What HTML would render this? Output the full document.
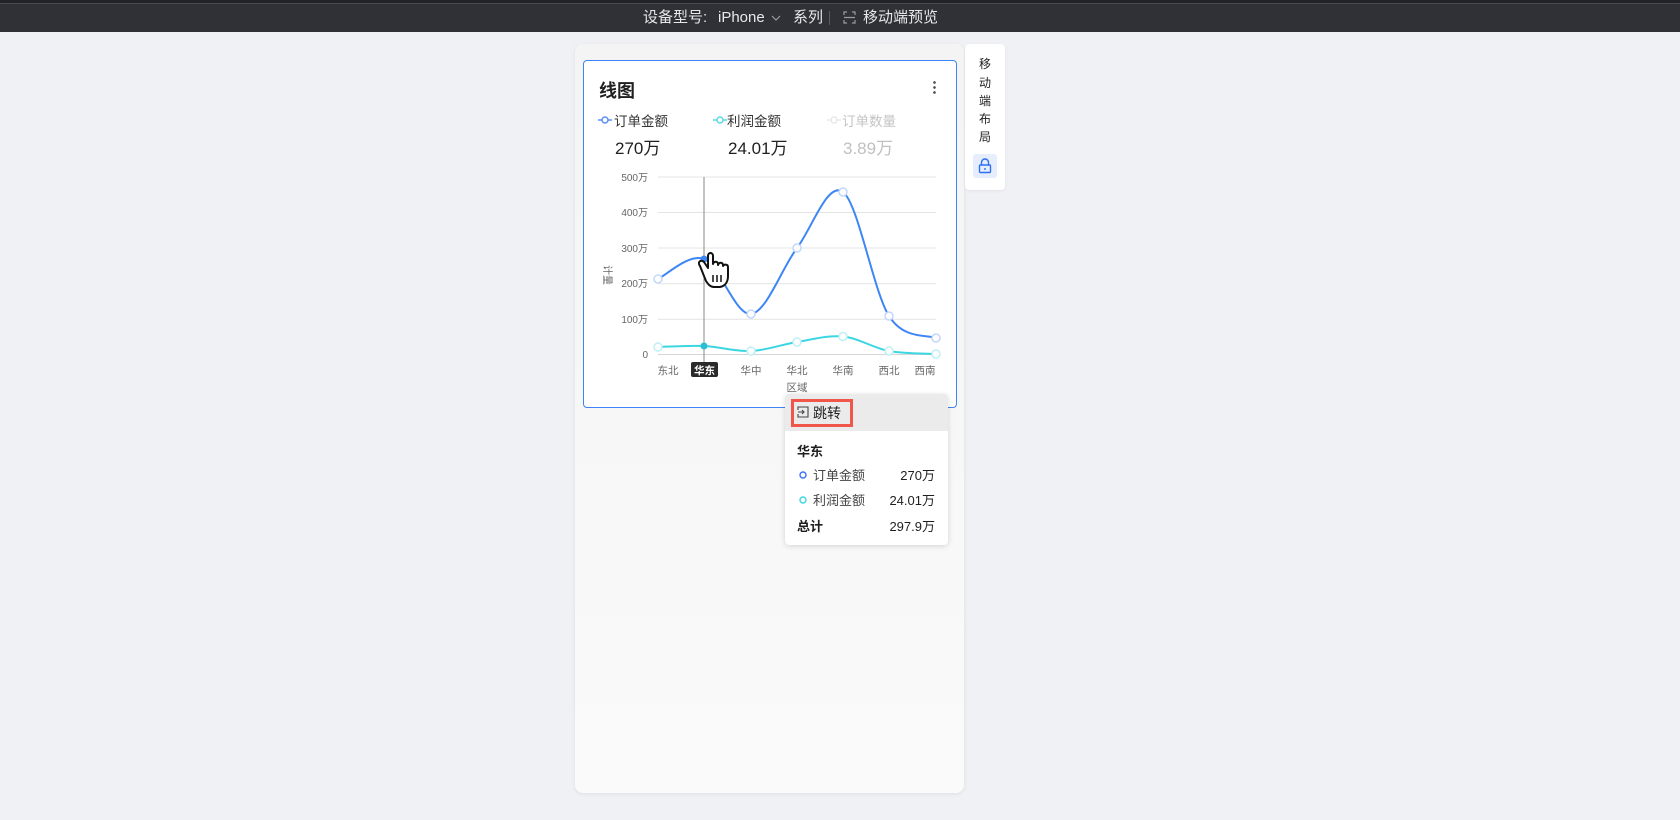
<!DOCTYPE html>
<html><head><meta charset="utf-8"><style>
*{margin:0;padding:0;box-sizing:border-box}
body{width:1680px;height:820px;background:#f0f1f5;font-family:"Liberation Sans","Noto Sans CJK SC",sans-serif;position:relative;overflow:hidden;color:#1f1f1f}
.top{position:absolute;left:0;top:0;width:1680px;height:32px;background:#303137;border-top:3px solid #222328}
.top .line{position:absolute;left:0;top:0;width:100%;height:1px;background:#4a4b52}
.t{position:absolute;top:8px;height:20px;line-height:20px;font-size:15px;color:#e8e8ea;white-space:nowrap}
.phone{position:absolute;left:575px;top:44px;width:389px;height:749px;border-radius:8px;background:linear-gradient(#f4f4f5,#fafafa);box-shadow:0 1px 4px rgba(0,0,0,.08)}
.card{position:absolute;left:583px;top:60px;width:374px;height:348px;background:#fff;border:1px solid #3f84f6;border-radius:4px}
.side{position:absolute;left:965px;top:44px;width:40px;height:146px;background:#fff;border-radius:4px;box-shadow:0 1px 3px rgba(0,0,0,.06)}
.side span{position:absolute;left:0;width:40px;text-align:center;font-size:12px;line-height:16px;color:#222}
.abs{position:absolute;white-space:nowrap}
.tip{position:absolute;left:785px;top:394px;width:163px;height:151px;background:#fff;border-radius:4px;box-shadow:0 1px 6px rgba(0,0,0,.15);overflow:hidden}
</style></head><body>
<div class="top"><div class="line"></div></div>
<div class="t" style="left:643px">设备型号:</div>
<div class="t" style="left:718px">iPhone</div>
<svg class="abs" style="left:771px;top:15px" width="10" height="7"><path d="M1 1l4 4 4-4" fill="none" stroke="#9a9ba0" stroke-width="1.2"/></svg>
<div class="t" style="left:793px">系列</div>
<div class="abs" style="left:829px;top:11px;width:1px;height:14px;background:#5a5b61"></div>
<svg class="abs" style="left:843px;top:11px" width="13" height="13"><path d="M1 4V1h3M9 1h3v3M12 9v3H9M4 12H1V9M1 6.5h11" fill="none" stroke="#9a9ba0" stroke-width="1.2"/></svg>
<div class="t" style="left:863px">移动端预览</div>

<div class="phone"></div>
<div class="card"></div>
<div class="abs" style="left:599px;top:77px;font-size:18px;font-weight:bold;color:#1f1f1f">线图</div>
<div class="abs" style="left:933px;top:80px;width:3px;height:14px;background:radial-gradient(circle,#555 1.2px,transparent 1.5px) 0 0/3px 5px"></div>

<svg class="abs" style="left:598px;top:115px" width="14" height="10"><path d="M0 5h14" stroke="#5b8ff9" stroke-width="1.5"/><circle cx="7" cy="5" r="3" fill="#fff" stroke="#5b8ff9" stroke-width="1.5"/></svg>
<div class="abs" style="left:614px;top:110px;font-size:13.5px;color:#333">订单金额</div>
<div class="abs" style="left:615px;top:134px;font-size:17px;color:#1f1f1f">270万</div>
<svg class="abs" style="left:713px;top:115px" width="14" height="10"><path d="M0 5h14" stroke="#5ad8e6" stroke-width="1.5"/><circle cx="7" cy="5" r="3" fill="#fff" stroke="#5ad8e6" stroke-width="1.5"/></svg>
<div class="abs" style="left:727px;top:110px;font-size:13.5px;color:#333">利润金额</div>
<div class="abs" style="left:728px;top:134px;font-size:17px;color:#1f1f1f">24.01万</div>
<svg class="abs" style="left:827px;top:115px" width="14" height="10"><path d="M0 5h14" stroke="#e8e8e8" stroke-width="1.5"/><circle cx="7" cy="5" r="3" fill="#fff" stroke="#e8e8e8" stroke-width="1.5"/></svg>
<div class="abs" style="left:842px;top:110px;font-size:13.5px;color:#c4c4c4">订单数量</div>
<div class="abs" style="left:843px;top:134px;font-size:17px;color:#c0c0c0">3.89万</div>

<svg class="abs" style="left:0;top:0" width="1680" height="420" font-family="Liberation Sans,Noto Sans CJK SC,sans-serif">
<g stroke="#e4e4e4" stroke-width="1">
<path d="M658 177H936M658 212.5H936M658 248H936M658 283.7H936M658 319.3H936"/>
</g>
<path d="M658 354.5H936" stroke="#d6d6d6"/>
<g font-size="10" fill="#666" text-anchor="end">
<text x="648" y="181">500万</text><text x="648" y="216">400万</text><text x="648" y="252">300万</text><text x="648" y="287">200万</text><text x="648" y="323">100万</text><text x="648" y="358">0</text>
</g>
<text x="0" y="0" font-size="10" fill="#666" transform="translate(604,265) rotate(90)">计量</text>
<path d="M704 177V362" stroke="#8a8a8a" stroke-width="1"/>
<path d="M658 279C665.7 275.7 688.5 253.2 704 259C719.5 264.8 735.5 315.8 751 314C766.5 312.2 781.7 268.3 797 248C812.3 227.7 827.7 180.7 843 192C858.3 203.3 873.5 291.7 889 316C904.5 340.3 928.2 334.3 936 338" fill="none" stroke="#3d86f6" stroke-width="2"/>
<path d="M658 347C665.7 346.8 688.5 345.3 704 346C719.5 346.7 735.5 351.7 751 351C766.5 350.3 781.7 344.5 797 342C812.3 339.6 827.7 335 843 336.5C858.3 338 873.5 348.1 889 351C904.5 353.9 928.2 353.5 936 354" fill="none" stroke="#3cd6e3" stroke-width="2"/>
<g fill="#fff" stroke="#c3d7fb" stroke-width="1.5">
<circle cx="658" cy="279" r="4"/><circle cx="751" cy="314" r="4"/><circle cx="797" cy="248" r="4"/><circle cx="843" cy="192" r="4"/><circle cx="889" cy="316" r="4"/><circle cx="936" cy="338" r="4"/>
</g>
<circle cx="704" cy="259" r="3.5" fill="#3d86f6"/>
<g fill="#fff" stroke="#bff0f5" stroke-width="1.5">
<circle cx="658" cy="347" r="4"/><circle cx="751" cy="351" r="4"/><circle cx="797" cy="342" r="4"/><circle cx="843" cy="336.5" r="4"/><circle cx="889" cy="351" r="4"/><circle cx="936" cy="354" r="4"/>
</g>
<circle cx="704" cy="346" r="3.5" fill="#2cbcd3"/>
<rect x="691" y="362" width="27" height="15" rx="2" fill="#2a2a2a"/>
<g font-size="10.5" fill="#666" text-anchor="middle">
<text x="668" y="374">东北</text><text x="704.5" y="374" fill="#fff" font-weight="bold">华东</text><text x="751" y="374">华中</text><text x="797" y="374">华北</text><text x="843" y="374">华南</text><text x="889" y="374">西北</text><text x="925" y="374">西南</text>
<text x="797" y="391">区域</text>
</g>
<path d="M700 266c-3-4 1-7 4-4l4 6v-12c0-4 5-4 5 0v8c1-3 5-3 5 0v1c1-3 5-3 5 0v1c1-2 5-2 5 1v9c0 6-3 10-8 11h-6c-4 0-6-3-8-6z" fill="#fff" stroke="#111" stroke-width="2" stroke-linejoin="round"/>
<path d="M713 275v7M717 275v7M721 275v7" stroke="#111" stroke-width="1.5"/>
</svg>

<div class="side">
<span style="top:12px">移</span><span style="top:31px">动</span><span style="top:49px">端</span><span style="top:67px">布</span><span style="top:85px">局</span>
</div>
<div class="abs" style="left:973px;top:154px;width:24px;height:24px;background:#e6eefd;border-radius:3px"></div>
<svg class="abs" style="left:978px;top:158px" width="14" height="16"><path d="M3.5 7V4.5a3.5 3.5 0 0 1 7 0V7" fill="none" stroke="#2f6ff0" stroke-width="1.4"/><rect x="1.5" y="7" width="11" height="7.5" rx="1" fill="none" stroke="#2f6ff0" stroke-width="1.4"/><path d="M7 10v2" stroke="#2f6ff0" stroke-width="1.4"/></svg>

<div class="tip">
<div style="height:37px;background:#ebebeb"></div>
</div>
<div class="abs" style="left:791px;top:399px;width:62px;height:28px;border:3px solid #f0564a"></div>
<svg class="abs" style="left:797px;top:406px" width="12" height="12"><path d="M1 4V1h10v10H1V8M1 6h6M5 4l2 2-2 2" fill="none" stroke="#444" stroke-width="1.1"/></svg>
<div class="abs" style="left:813px;top:403px;font-size:14px;color:#222">跳转</div>
<div class="abs" style="left:797px;top:441px;font-size:13px;font-weight:bold;color:#1f1f1f">华东</div>
<svg class="abs" style="left:799px;top:471px" width="8" height="8"><circle cx="4" cy="4" r="3" fill="none" stroke="#3d6ff6" stroke-width="1.4"/></svg>
<div class="abs" style="left:813px;top:465px;font-size:13px;color:#444">订单金额</div>
<div class="abs" style="left:885px;top:465px;width:50px;text-align:right;font-size:13px;color:#1f1f1f">270万</div>
<svg class="abs" style="left:799px;top:496px" width="8" height="8"><circle cx="4" cy="4" r="3" fill="none" stroke="#3cd6e3" stroke-width="1.4"/></svg>
<div class="abs" style="left:813px;top:490px;font-size:13px;color:#444">利润金额</div>
<div class="abs" style="left:875px;top:490px;width:60px;text-align:right;font-size:13px;color:#1f1f1f">24.01万</div>
<div class="abs" style="left:797px;top:516px;font-size:13px;font-weight:bold;color:#1f1f1f">总计</div>
<div class="abs" style="left:875px;top:516px;width:60px;text-align:right;font-size:13px;color:#1f1f1f">297.9万</div>
</body></html>
